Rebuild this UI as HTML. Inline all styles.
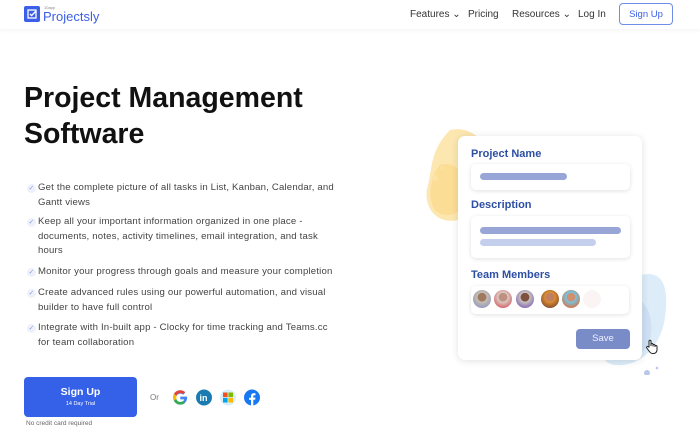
<!DOCTYPE html>
<html><head><meta charset="utf-8"><style>
*{margin:0;padding:0;box-sizing:border-box}
body{width:700px;height:435px;overflow:hidden;background:#fff;font-family:"Liberation Sans",sans-serif;position:relative;color:#333}
.a{position:absolute}
.nav{font-size:10px;color:#333;top:9px}
ul li{list-style:none;position:absolute;left:38px;font-size:9.6px;letter-spacing:.18px;line-height:14.5px;color:#444;width:296px}
ul li:before{content:"✓";position:absolute;left:-11px;top:0;font-size:7px;color:#8aa0d8;background:#eef1fb;border-radius:50%;width:9px;height:9px;line-height:9px;text-align:center;margin-top:3px}
.lbl{font-size:11px;color:#2d4fa3;font-weight:bold;left:471px}
.fld{background:#fff;border-radius:5px;box-shadow:0 1px 5px rgba(0,0,0,.12)}
.bar{border-radius:4px;height:7px}
.av{width:18px;height:18px;border-radius:50%;top:290px}
</style></head><body>
<div class="a" style="left:0;top:0;width:700px;height:29px;box-shadow:0 2px 4px rgba(0,0,0,.04)"></div>
<div class="a" style="left:24px;top:6px;width:16px;height:16px;background:#3b5fe6;border-radius:2px"><svg width="16" height="16"><rect x="4" y="4" width="8" height="8" fill="none" stroke="#fff" stroke-width="1.3"/><path d="M6 8l1.6 1.6L12 5" fill="none" stroke="#fff" stroke-width="1.3"/></svg></div>
<div class="a" style="left:44px;top:5px;font-size:4px;color:#888">10app</div>
<div class="a" style="left:43px;top:9px;font-size:13px;color:#3b5fe6">Projectsly</div>
<div class="a nav" style="left:410px">Features ⌄</div>
<div class="a nav" style="left:468px">Pricing</div>
<div class="a nav" style="left:512px">Resources ⌄</div>
<div class="a nav" style="left:578px">Log In</div>
<div class="a" style="left:619px;top:3px;width:54px;height:22px;border:1px solid #6f8ce8;border-radius:4px;font-size:9.5px;color:#3b5fe6;display:flex;align-items:center;justify-content:center">Sign Up</div>
<div class="a" style="left:24px;top:80px;font-size:28.5px;font-weight:bold;line-height:36px;color:#111">Project Management<br>Software</div>
<ul>
<li style="top:181px">Get the complete picture of all tasks in List, Kanban, Calendar, and Gantt views</li>
<li style="top:215px">Keep all your important information organized in one place - documents, notes, activity timelines, email integration, and task hours</li>
<li style="top:265px;width:310px">Monitor your progress through goals and measure your completion</li>
<li style="top:286px">Create advanced rules using our powerful automation, and visual builder to have full control</li>
<li style="top:321px">Integrate with In-built app - Clocky for time tracking and Teams.cc for team collaboration</li>
</ul>
<div class="a" style="left:24px;top:377px;width:113px;height:40px;background:#3560e8;border-radius:4px;color:#fff;text-align:center"><div style="font-size:10.5px;font-weight:bold;margin-top:9px">Sign Up</div><div style="font-size:5.5px;margin-top:3px">14 Day Trial</div></div>
<div class="a" style="left:26px;top:420px;font-size:6.5px;color:#666">No credit card required</div>
<div class="a" style="left:150px;top:393px;font-size:8px;color:#777">Or</div>
<svg class="a" style="left:172px;top:389px" width="90" height="17">
<path d="M15 7.6H8.3v2.8h3.8c-.4 1.9-2 3-3.8 3a4.4 4.4 0 010-8.8c1.1 0 2 .4 2.8 1.1l2-2A7.3 7.3 0 008.3 1.2a7.2 7.2 0 100 14.4c3.7 0 6.9-2.7 6.9-7.2 0-.3 0-.6-.2-.8z" fill="#4285f4"/>
<path d="M2 4.8l2.4 1.8A4.4 4.4 0 018.3 4c1.1 0 2 .4 2.8 1.1l2-2A7.3 7.3 0 002 4.8z" fill="#ea4335"/>
<path d="M1.3 8.4c0 1.1.3 2.2.8 3.2l2.4-1.9a4.4 4.4 0 010-2.6L2 4.8a7 7 0 00-.8 3.6z" fill="#fbbc05"/>
<path d="M8.3 15.6c1.9 0 3.6-.6 4.8-1.7l-2.3-1.8c-.7.5-1.5.8-2.5.8-1.8 0-3.3-1.2-3.9-2.8L2 12a7.2 7.2 0 006.3 3.6z" fill="#34a853"/>
<circle cx="32" cy="8.5" r="8" fill="#1a7bb0"/><text x="27.5" y="12" font-size="9" font-weight="bold" fill="#fff" font-family="Liberation Sans">in</text>
<circle cx="56" cy="8.5" r="8" fill="#d8eefa"/><rect x="51" y="3.5" width="4.6" height="4.6" fill="#f25022"/><rect x="56.4" y="3.5" width="4.6" height="4.6" fill="#7fba00"/><rect x="51" y="8.9" width="4.6" height="4.6" fill="#00a4ef"/><rect x="56.4" y="8.9" width="4.6" height="4.6" fill="#ffb900"/>
<circle cx="80" cy="8.5" r="8" fill="#1877f2"/><path d="M81.3 16.4v-5.6h1.9l.3-2.2h-2.2V7.3c0-.6.2-1 1-1h1.2V4.3c-.2 0-.9-.1-1.7-.1-1.7 0-2.8 1-2.8 2.9v1.6h-1.9v2.2H79v5.6z" fill="#fff"/>
</svg>
<svg class="a" style="left:420px;top:125px" width="260" height="250">
<path d="M30 5c25-5 40 15 38 40-2 30-10 45-30 50C15 100 2 80 8 60 12 45 10 25 30 5z" fill="#fde7b0"/>
<path d="M20 40c15-5 30 10 25 35-3 15-20 20-30 10-8-10-5-35 5-45z" fill="#fbd88a" opacity=".7"/>
<circle cx="15" cy="53" r="3" fill="#fde2a6"/><circle cx="22" cy="43" r="1.3" fill="#fde2a6"/>
<path d="M215 152c25-10 35 5 30 40-4 30-25 50-50 48-20-3-15-25 0-40 10-12 10-40 20-48z" fill="#dcecf8"/>
<path d="M205 170c20 0 30 20 25 45-5 15-20 20-30 12-15-15-15-55 5-57z" fill="#c9ddf2" opacity=".8"/>
<circle cx="227" cy="248" r="3" fill="#b8c8ea"/><circle cx="237" cy="243" r="1.3" fill="#b8c8ea"/>
</svg>
<div class="a" style="left:458px;top:136px;width:184px;height:224px;background:#fff;border-radius:7px;box-shadow:0 1px 8px rgba(0,0,0,.12)"></div>
<div class="a lbl" style="top:148px">Project Name</div>
<div class="a fld" style="left:471px;top:164px;width:159px;height:26px"></div>
<div class="a bar" style="left:480px;top:173px;width:87px;background:#97a6d6"></div>
<div class="a lbl" style="top:199px">Description</div>
<div class="a fld" style="left:471px;top:216px;width:159px;height:42px"></div>
<div class="a bar" style="left:480px;top:227px;width:141px;background:#97a6d6"></div>
<div class="a bar" style="left:480px;top:239px;width:116px;background:#c3cfec"></div>
<div class="a lbl" style="top:269px">Team Members</div>
<div class="a fld" style="left:471px;top:286px;width:158px;height:28px"></div>
<div class="a av" style="left:473px;background:radial-gradient(circle at 50% 40%,#a07a60 30%,#c8c0b0 32%,#8690c0 90%)"></div>
<div class="a av" style="left:494px;background:radial-gradient(circle at 50% 40%,#c09080 30%,#d8d0c8 32%,#d84850 90%)"></div>
<div class="a av" style="left:516px;background:radial-gradient(circle at 50% 40%,#805040 30%,#c8c8c0 32%,#7a50b0 90%)"></div>
<div class="a av" style="left:541px;background:radial-gradient(circle at 50% 40%,#c08060 30%,#e09030 32%,#704030 90%)"></div>
<div class="a av" style="left:562px;background:radial-gradient(circle at 50% 40%,#d09070 30%,#70c8e8 32%,#f06020 90%)"></div>
<div class="a av" style="left:583px;background:#f6efec;opacity:.6"></div>
<div class="a" style="left:576px;top:329px;width:54px;height:20px;background:#7a8cc8;border-radius:4px;color:#eef;font-size:9.5px;text-align:center;line-height:20px">Save</div>
<svg class="a" style="left:645px;top:339px" width="14" height="15"><path d="M4 8V2.2a1 1 0 012 0V7V5.5a1 1 0 012 0V7.5V6.5a1 1 0 012 0V8V7.5a1 1 0 012 0V11c0 2-1.5 3.5-3.5 3.5H7.5C6 14.5 5 13.5 4 12L1.8 9a1 1 0 011.6-1.2z" fill="#fff" stroke="#222" stroke-width="1"/></svg>
</body></html>
